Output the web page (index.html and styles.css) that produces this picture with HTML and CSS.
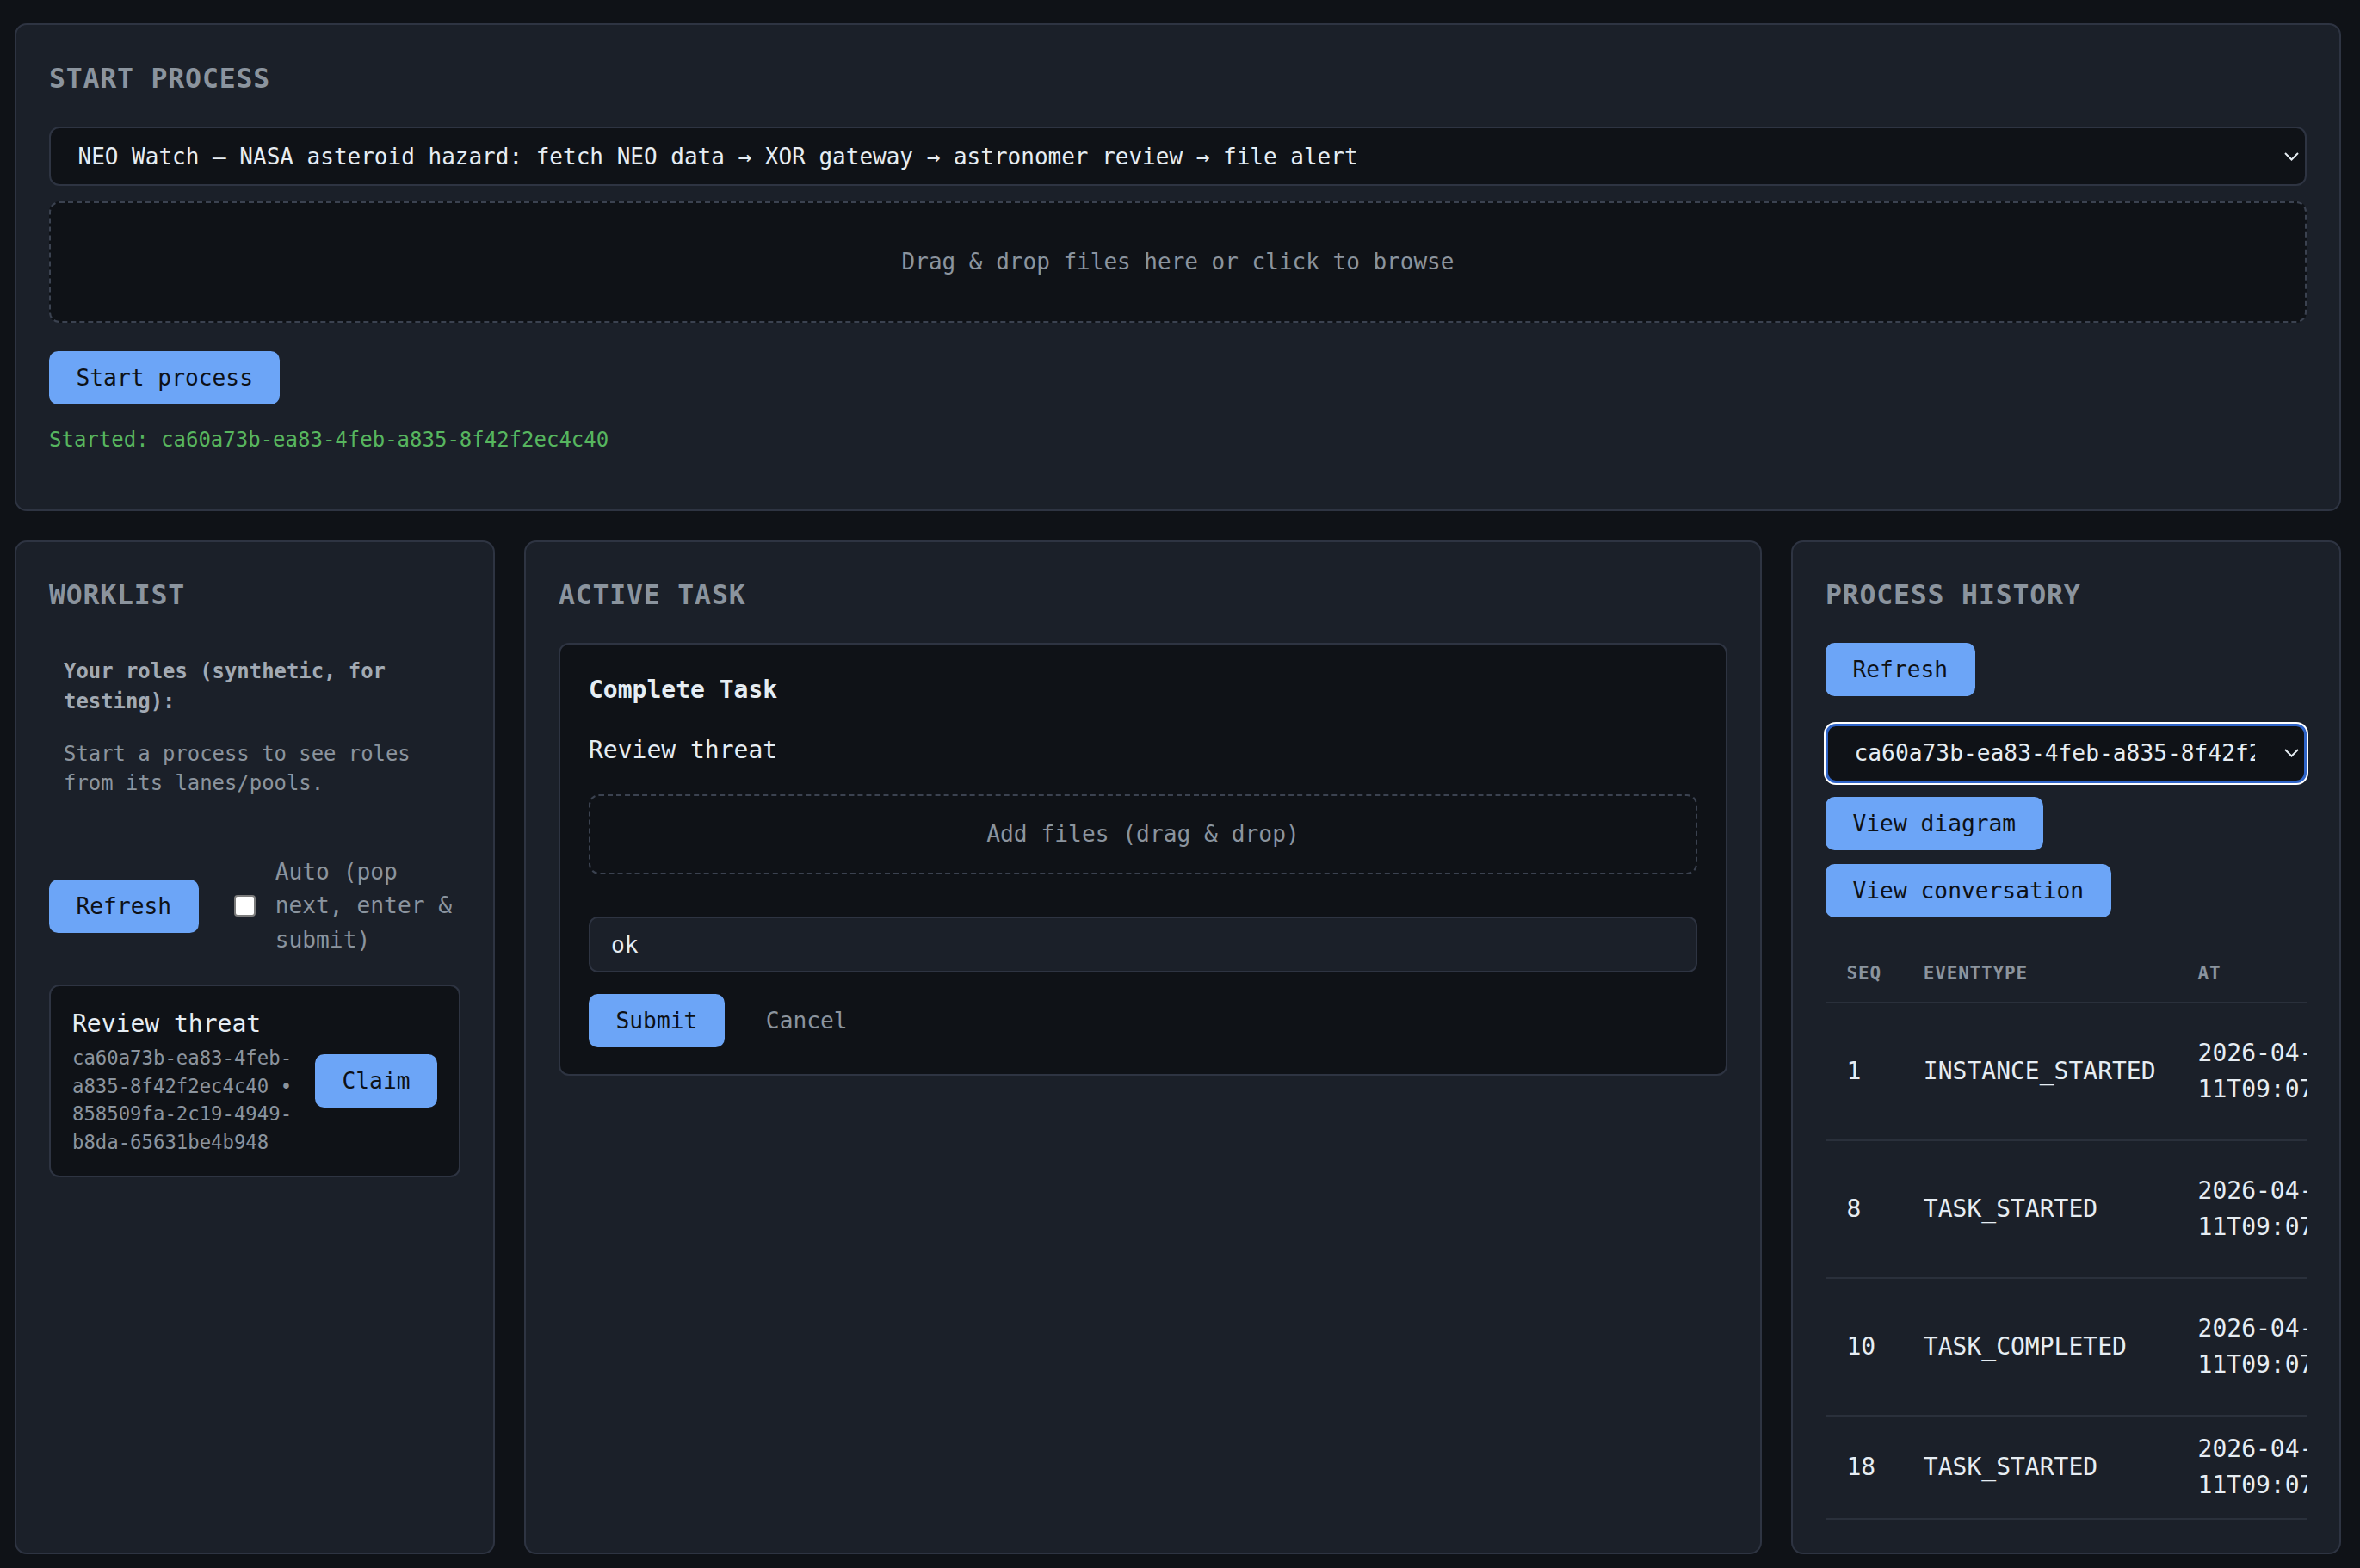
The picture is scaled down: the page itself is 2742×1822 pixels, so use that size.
FILE: index.html
```html
<!DOCTYPE html>
<html lang="en">
    <head>
        <meta charset="UTF-8">
        <meta name="viewport" content="width=device-width, initial-scale=1.0">
        <title>Process Console</title>
        <link rel="stylesheet" href="styles.css">
    </head>
    <body>
        <section class="panel panel-start">
            <h2 class="panel-title">START PROCESS</h2>
            <div class="select-wrap">
                <select class="select">
                    <option>NEO Watch — NASA asteroid hazard: fetch NEO data → XOR gateway → astronomer review → file alert</option>
                </select>
                <svg class="chevron" viewBox="0 0 17 10"><polyline points="1,1 8.5,8.5 16,1"/></svg>
            </div>
            <div class="dropzone dropzone-lg">Drag &amp; drop files here or click to browse</div>
            <div class="actions">
                <button class="btn">Start process</button>
            </div>
            <p class="started">Started: ca60a73b-ea83-4feb-a835-8f42f2ec4c40</p>
        </section>

        <div class="columns">
            <!-- worklist -->
            <section class="panel">
                <h2 class="panel-title">WORKLIST</h2>
                <div class="roles">
                    <p class="roles-label">Your roles (synthetic, for testing):</p>
                    <p class="roles-hint">Start a process to see roles from its lanes/pools.</p>
                </div>
                <div class="worklist-controls">
                    <button class="btn">Refresh</button>
                    <label class="auto-toggle">
                        <input type="checkbox" class="checkbox">
                        <span>Auto (pop next, enter &amp; submit)</span>
                    </label>
                </div>
                <div class="task-item">
                    <div class="task-info">
                        <div class="task-name">Review threat</div>
                        <div class="task-ids">ca60a73b-ea83-4feb-a835-8f42f2ec4c40 • 858509fa-2c19-4949-b8da-65631be4b948</div>
                    </div>
                    <button class="btn">Claim</button>
                </div>
            </section>

            <!-- active task -->
            <section class="panel">
                <h2 class="panel-title">ACTIVE TASK</h2>
                <div class="task-form">
                    <h3 class="task-form-title">Complete Task</h3>
                    <p class="task-form-name">Review threat</p>
                    <div class="dropzone dropzone-sm">Add files (drag &amp; drop)</div>
                    <input class="text-input" type="text" value="ok">
                    <div class="actions actions-tight">
                        <button class="btn">Submit</button>
                        <button class="btn btn-ghost">Cancel</button>
                    </div>
                </div>
            </section>

            <!-- history -->
            <section class="panel">
                <h2 class="panel-title">PROCESS HISTORY</h2>
                <div class="history-toolbar">
                    <button class="btn">Refresh</button>
                </div>
                <div class="history-picker">
                    <div class="select-wrap">
                        <select class="select is-focused">
                            <option>ca60a73b-ea83-4feb-a835-8f42f2ec4c40</option>
                        </select>
                        <svg class="chevron" viewBox="0 0 17 10"><polyline points="1,1 8.5,8.5 16,1"/></svg>
                    </div>
                    <button class="btn">View diagram</button>
                    <button class="btn">View conversation</button>
                </div>
                <div class="table-wrap">
                    <table class="events">
                        <thead>
                            <tr><th>SEQ</th><th>EVENTTYPE</th><th>AT</th></tr>
                        </thead>
                        <tbody>
                            <tr class="tall"><td>1</td><td>INSTANCE_STARTED</td><td>2026-04-11T09:07:41.512Z</td></tr>
                            <tr class="tall"><td>8</td><td>TASK_STARTED</td><td>2026-04-11T09:07:41.598Z</td></tr>
                            <tr class="tall"><td>10</td><td>TASK_COMPLETED</td><td>2026-04-11T09:07:52.204Z</td></tr>
                            <tr><td>18</td><td>TASK_STARTED</td><td>2026-04-11T09:07:52.331Z</td></tr>
                        </tbody>
                    </table>
                </div>
            </section>
        </div>
    </body>
</html>
```

FILE: styles.css
```css
* {
    box-sizing: border-box;
}
body {
    margin: 0;
    padding: 27px 22px 17px 17px;
    background: #0f1217;
    color: #e6edf3;
    font-family: "DejaVu Sans Mono", monospace;
    font-size: 26.25px;
    line-height: 1.5;
}
.panel {
    background: #1b2029;
    border: 2px solid #2e3442;
    border-radius: 14px;
    padding: 38px;
}
.panel-start {
    padding-top: 39px;
}
.panel-title {
    margin: 0 0 32px;
    font-size: 31.5px;
    font-weight: 700;
    letter-spacing: 0.8px;
    line-height: 1.5;
    color: #8b949e;
}

/* selects */
.select-wrap {
    position: relative;
}
.select {
    display: block;
    width: 100%;
    appearance: none;
    -webkit-appearance: none;
    background: #0f1217;
    color: #e6edf3;
    border: 2px solid #2e3442;
    border-radius: 12px;
    padding: 17.5px 56px 17.5px 31.5px;
    font-family: inherit;
    font-size: 26px;
    line-height: normal;
}
.select.is-focused {
    border: 3px solid #2f64c8;
    padding: 16.5px 57px 16.5px 30.5px;
    font-size: 26.25px;
    box-shadow: 0 0 0 2px #ffffff;
    outline: none;
}
.chevron {
    position: absolute;
    right: 9px;
    top: 50%;
    width: 17px;
    height: 10px;
    margin-top: -5px;
    fill: none;
    stroke: #e6edf3;
    stroke-width: 2;
    pointer-events: none;
}

.dropzone {
    border: 2px dashed #3b4250;
    border-radius: 12px;
    background: #0f1217;
    color: #8b949e;
    text-align: center;
}
.dropzone-lg {
    margin-top: 17.5px;
    padding: 49px 20px;
    font-size: 26px;
    line-height: 39.4px;
}
.dropzone-sm {
    padding: 25px 20px;
}

.actions {
    display: flex;
    align-items: center;
    gap: 16.5px;
    margin-top: 33px;
}
.actions-tight {
    margin-top: 25px;
}
.btn {
    flex: none;
    font-family: inherit;
    font-size: 26.25px;
    line-height: normal;
    padding: 15.75px 31.5px;
    border: 0;
    border-radius: 10.5px;
    background: #6ca5f7;
    color: #0d1117;
    cursor: pointer;
}
.btn-ghost {
    background: transparent;
    color: #8b949e;
}

.started {
    margin: 23.8px 0 24.5px;
    font-size: 24px;
    color: #57b65f;
}

.columns {
    display: grid;
    grid-template-columns: 558px 1fr 639px;
    gap: 34px;
    margin-top: 34px;
}

/* worklist */
.roles {
    padding: 16px 17px;
    font-size: 23.9px;
    line-height: 34.3px;
}
.roles-label {
    margin: 0;
    font-weight: 700;
    color: #a2aab4;
}
.roles-hint {
    margin: 27px 0 0;
    color: #8b949e;
}
.worklist-controls {
    display: flex;
    align-items: center;
    gap: 41px;
    margin-top: 50.5px;
}
.auto-toggle {
    display: flex;
    align-items: center;
    gap: 23px;
    flex: 1;
    min-width: 0;
    color: #8b949e;
}
.checkbox {
    appearance: none;
    -webkit-appearance: none;
    flex: none;
    width: 25px;
    height: 25px;
    margin: 0;
    background: #ffffff;
    border: 2px solid #7b7b7b;
    border-radius: 4px;
}
.task-item {
    display: flex;
    align-items: center;
    gap: 16.5px;
    margin-top: 32px;
    background: #0f1217;
    border: 2px solid #2e3442;
    border-radius: 12px;
    padding: 23px 25px;
}
.task-info {
    flex: 1;
    min-width: 0;
}
.task-name {
    font-size: 28px;
    line-height: 42px;
}
.task-ids {
    margin-top: 2px;
    font-size: 22.3px;
    line-height: 32.6px;
    color: #8b949e;
}

/* active task */
.task-form {
    background: #0f1217;
    border: 2px solid #2e3442;
    border-radius: 12px;
    padding: 33px 33px 31px;
}
.task-form-title {
    margin: 0 0 29.8px;
    font-size: 28px;
    line-height: 39.2px;
    font-weight: 700;
}
.task-form-name {
    margin: 0 0 29.4px;
    font-size: 28px;
    line-height: 42px;
}
.text-input {
    display: block;
    width: 100%;
    margin-top: 49px;
    padding: 15.7px 24px;
    font-family: inherit;
    font-size: 26.25px;
    line-height: normal;
    background: #1b2029;
    color: #e6edf3;
    border: 2px solid #2e3442;
    border-radius: 10.5px;
}

/* history */
.history-toolbar {
    display: flex;
    margin-bottom: 32px;
}
.history-picker {
    display: flex;
    flex-wrap: wrap;
    gap: 16.5px;
}
.history-picker .select-wrap {
    flex: 0 0 100%;
}
.table-wrap {
    margin-top: 31px;
    overflow: hidden;
}
.events {
    border-collapse: collapse;
}
.events th {
    text-align: left;
    font-size: 21px;
    line-height: 31.5px;
    letter-spacing: 0.8px;
    font-weight: 700;
    color: #8b949e;
    padding: 19px 24.5px 16.5px;
    border-bottom: 2px solid #2a303b;
}
.events td {
    font-size: 28px;
    line-height: 41.5px;
    padding: 17.5px 24.5px;
    border-bottom: 2px solid #2a303b;
    vertical-align: middle;
}
.events tr.tall {
    height: 160px;
}
```
